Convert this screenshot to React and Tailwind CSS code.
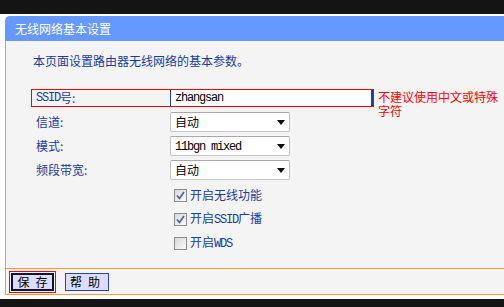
import React from "react";

const CJK = "font-['Noto_Sans_CJK_SC','Noto_Sans_CJK_JP',sans-serif]";

// SimSun-style half-width latin
function Mono({ children }) {
  return (
    <span className="font-['Liberation_Mono','Noto_Sans_CJK_SC',monospace] text-[12px] tracking-[-1.2px]">
      {children}
    </span>
  );
}

function SelectBox({ children }) {
  return (
    <div className="w-[120px] h-[20px] bg-white border border-[#c4c4c4] border-t-[#a8a8a8] rounded-[2px] flex items-center justify-between pl-[4px] pr-[4px] text-black">
      <span className="leading-[12px]">{children}</span>
      <svg width="8" height="5" viewBox="0 0 8 5">
        <path d="M0 0 H8 L4 5 Z" fill="#111" />
      </svg>
    </div>
  );
}

function Check({ checked, children }) {
  return (
    <div className="h-[24px] flex items-center gap-[3px]">
      <span className="w-[13px] h-[13px] border border-[#8c8c8c] bg-gradient-to-br from-[#d8d8d8] to-[#fbfbfb] flex items-center justify-center">
        {checked && (
          <svg width="9" height="9" viewBox="0 0 9 9">
            <path d="M1 4.5 L3.5 7.5 L8 1" stroke="#4a5a9c" strokeWidth="1.6" fill="none" />
          </svg>
        )}
      </span>
      <span className="text-[#1a3c9c] leading-[12px]">{children}</span>
    </div>
  );
}

export default function App() {
  return (
    <div className={`w-[504px] h-[307px] bg-white overflow-hidden flex flex-col text-[12px] ${CJK}`}>
      <div className="h-[14px] shrink-0 bg-[#141414]" />
      <div className="h-[2px] shrink-0" />

      <div className="ml-[5px] w-[520px] flex flex-col shrink-0">
        {/* title bar */}
        <div className="h-[25px] bg-[#6699ff] rounded-tl-[5px] text-white pl-[10px] flex items-center leading-[12px]">
          无线网络基本设置
        </div>

        {/* body */}
        <div className="h-[227px] border-l border-[#ff9933] bg-[#f4f4f4] pt-[14px] pl-[25px]">
          <div className="pl-[2px] leading-[12px] text-[#1a3c9c]">本页面设置路由器无线网络的基本参数。</div>

          <div className="mt-[22px] h-[18px] flex items-start">
            <div className="w-[343px] h-[18px] shrink-0 border border-[#ff0000] flex">
              <div className="w-[138px] pl-[4px] flex items-center text-[#1a3c9c] leading-[12px]">
                <Mono>SSID</Mono>号:
              </div>
              <div className="flex-1 bg-white border-l border-r-2 border-[#1f3fa0] pl-[4px] flex items-center text-black">
                <Mono>zhangsan</Mono>
              </div>
            </div>
            <div className="ml-[4px] w-[122px] shrink-0 leading-[14px] text-[#ff0000] mt-[1px]">不建议使用中文或特殊字符</div>
          </div>

          <div className="mt-[5px] flex flex-col gap-[4px]">
            <div className="flex items-center">
              <div className="w-[139px] pl-[5px] text-[#1a3c9c]">信道:</div>
              <SelectBox>自动</SelectBox>
            </div>
            <div className="flex items-center">
              <div className="w-[139px] pl-[5px] text-[#1a3c9c]">模式:</div>
              <SelectBox>
                <Mono>11bgn mixed</Mono>
              </SelectBox>
            </div>
            <div className="flex items-center">
              <div className="w-[139px] pl-[5px] text-[#1a3c9c]">频段带宽:</div>
              <SelectBox>自动</SelectBox>
            </div>
          </div>

          <div className="mt-[3px] pl-[143px] flex flex-col">
            <Check checked>开启无线功能</Check>
            <Check checked>
              开启<Mono>SSID</Mono>广播
            </Check>
            <Check>
              开启<Mono>WDS</Mono>
            </Check>
          </div>
        </div>

        {/* footer */}
        <div className="h-[27px] border-l border-t border-b border-[#ff9933] bg-[#f4f4f4] pl-[3px] pt-[2px] flex items-start">
          <div className="border border-[#ff0000] p-[1px]">
            <button className="w-[43px] h-[18px] border-2 border-[#10142a] bg-[#dcdcfc] flex items-center justify-center gap-[6px] text-black leading-[12px]">
              <span>保</span>
              <span>存</span>
            </button>
          </div>
          <button className="ml-[9px] mt-[2px] w-[44px] h-[18px] border border-[#2a44aa] bg-[#dcdcfc] flex items-center justify-center gap-[6px] pr-[4px] text-black leading-[12px]">
            <span>帮</span>
            <span>助</span>
          </button>
        </div>
      </div>

      <div className="h-[4px] shrink-0" />
      <div className="flex-1 bg-[#141414]" />
    </div>
  );
}
